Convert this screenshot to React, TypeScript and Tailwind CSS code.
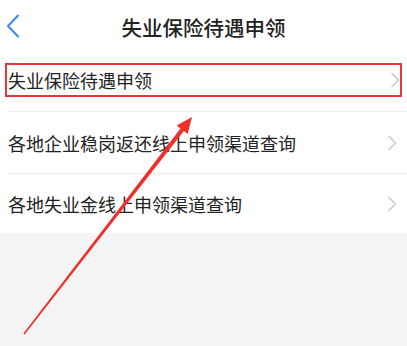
const items = ["失业保险待遇申领", "各地企业稳岗返还线上申领渠道查询", "各地失业金线上申领渠道查询"];

function Chevron() {
  return (
    <svg width="10" height="16" viewBox="0 0 10 16" className="shrink-0">
      <path d="M2 1.5 L8.5 8 L2 14.5" fill="none" stroke="#c9c9c9" strokeWidth="1.5" strokeLinecap="round" strokeLinejoin="round" />
    </svg>
  );
}

export default function App() {
  return (
    <div
      className="relative min-h-[346px] w-[407px] overflow-hidden bg-[#f4f4f4] text-[#222]"
      style={{ fontFamily: '"Noto Sans CJK SC", "Noto Sans", sans-serif' }}
    >
      <div className="bg-white">
        {/* header */}
        <div className="relative flex h-[52px] items-center justify-center">
          <svg width="14" height="24" viewBox="0 0 14 24" className="absolute left-[6px] top-[14px]">
            <path d="M12 1.5 L2 12 L12 22.5" fill="none" stroke="#3d88ee" strokeWidth="2" strokeLinecap="round" strokeLinejoin="round" />
          </svg>
          <h1 className="mt-[3px] text-[20.5px] font-medium leading-none tracking-[0px]">失业保险待遇申领</h1>
        </div>

        {/* row 1 with highlight */}
        <div className="px-[5px] pb-[14px] pt-[11px]">
          <div className="flex h-[34px] items-center justify-between border-2 border-[#e8363a] pl-[1px] pr-[0px]">
            <span className="text-[18px] leading-none">{items[0]}</span>
            <Chevron />
          </div>
        </div>
        <div className="ml-[8px] h-px bg-[#ececec]" />

        <div className="flex h-[61px] items-center justify-between pl-[8px] pr-[10px]">
          <span className="text-[18px] leading-none">{items[1]}</span>
          <Chevron />
        </div>
        <div className="ml-[8px] h-px bg-[#ececec]" />

        <div className="flex h-[59px] items-center justify-between pl-[8px] pr-[10px]">
          <span className="text-[18px] leading-none">{items[2]}</span>
          <Chevron />
        </div>
      </div>

      {/* annotation arrow */}
      <svg width="407" height="346" viewBox="0 0 407 346" className="pointer-events-none absolute left-0 top-0">
        <polygon
          points="23.4,333.6 180.5,128.4 176.7,125.4 192,117 187.7,134 183.9,131.1 24.6,334.4"
          fill="#ee2f2a"
        />
      </svg>
    </div>
  );
}
